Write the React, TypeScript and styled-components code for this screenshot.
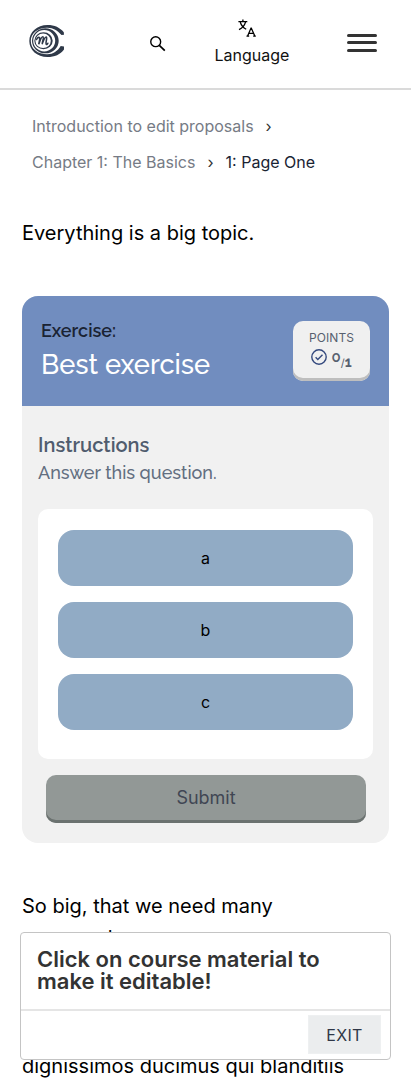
import React from "react";
import styled, { createGlobalStyle } from "styled-components";

const GlobalStyle = createGlobalStyle`
  *, *::before, *::after { box-sizing: border-box; }
  html, body { margin: 0; height: 100%; overflow: hidden; background: #fff; }
  body { font-family: Inter, "Liberation Sans", sans-serif; color: #000; }
  button { font-family: inherit; cursor: pointer; }
  h1, h2, h3, p, ol { margin: 0; padding: 0; }
`;

const Page = styled.div`
  height: 1080px;
  overflow: hidden;
`;

const Header = styled.header`
  display: flex;
  align-items: center;
  height: 90px;
  padding: 0 34px 0 29px;
  border-bottom: 2px solid #dadada;
`;

const Logo = styled.svg`
  width: 37px;
  height: 34px;
  margin-bottom: 6px;
`;

const IconButton = styled.button`
  display: flex;
  padding: 0;
  border: 0;
  background: none;
`;

const SearchButton = styled(IconButton)`
  margin-left: 83px;
  margin-bottom: 1px;
`;

const LanguageButton = styled(IconButton)`
  flex-direction: column;
  align-items: center;
  gap: 8px;
  width: 76px;
  margin-left: 48px;
  margin-bottom: 4px;
  font-size: 16px;
  line-height: 20px;
  color: #111;
`;

const LanguageIcon = styled.svg`
  width: 18px;
  height: 18px;
  margin-right: 10px;
`;

const MenuButton = styled(IconButton)`
  flex-direction: column;
  justify-content: space-between;
  height: 18px;
  margin-left: auto;
  margin-bottom: 2px;
`;

const MenuBar = styled.span`
  width: 30px;
  height: 3px;
  border-radius: 2px;
  background: #333;

  &:nth-child(2) {
    margin-bottom: 1px;
  }
`;

const Breadcrumbs = styled.ol`
  display: flex;
  flex-wrap: wrap;
  margin: 18px 32px 0;
  list-style: none;
  font-size: 16px;
  line-height: 36px;
`;

const Crumb = styled.li<{ $current?: boolean }>`
  color: ${(p) => (p.$current ? "#1a2333" : "#767b85")};
`;

const Separator = styled.span`
  margin: 0 12px;
  color: #333;
`;

const Content = styled.main`
  padding: 37px 22px 0;
`;

const Paragraph = styled.p<{ $gap?: number }>`
  margin-bottom: ${(p) => p.$gap ?? 32}px;
  font-size: 20px;
  line-height: 32px;
`;

const Exercise = styled.section`
  margin: 47px 0;
  overflow: hidden;
  border-radius: 16px;
  background: #f1f1f1;
`;

const ExerciseHeader = styled.div`
  display: flex;
  justify-content: space-between;
  align-items: flex-start;
  height: 110px;
  padding: 25px 19px 0;
  background: #718dbf;
  font-family: Raleway, Lato, sans-serif;
`;

const ExerciseLabel = styled.div`
  font-size: 18px;
  font-weight: 600;
  line-height: 20px;
  color: #1a2333;
`;

const ExerciseTitle = styled.h2`
  margin-top: 6px;
  font-size: 27.2px;
  font-weight: 500;
  line-height: 34px;
  color: #fff;
`;

const Points = styled.div`
  display: flex;
  flex-direction: column;
  align-items: center;
  width: 77px;
  height: 60px;
  padding-top: 9px;
  border-radius: 10px;
  background: #f0f0f0;
  box-shadow: inset 0 -3px 0 #bebebe;
  color: #57606f;
  font-family: Inter, sans-serif;
  font-size: 12px;
  line-height: 16px;
  letter-spacing: 0.1px;
`;

const Score = styled.div`
  display: flex;
  align-items: center;
  height: 21px;
  font-family: Raleway, Lato, sans-serif;
  font-size: 15px;
  font-weight: 600;
  letter-spacing: 0;
`;

const ScoreIcon = styled.svg`
  width: 16px;
  height: 16px;
  margin-right: 4px;
`;

const MaxScore = styled.span`
  padding-top: 12px;
  font-size: 14px;
  font-weight: 700;
`;

const Slash = styled.span`
  font-family: Inter, sans-serif;
  font-size: 11px;
  font-weight: 400;
`;

const ExerciseBody = styled.div`
  padding: 27px 16px 20px;
`;

const InstructionsTitle = styled.h3`
  font-family: Raleway, Lato, sans-serif;
  font-size: 20px;
  font-weight: 600;
  line-height: 24px;
  color: #505c6e;
`;

const InstructionsText = styled.p`
  margin-top: 3px;
  font-family: Raleway, Lato, sans-serif;
  font-size: 18px;
  font-weight: 500;
  line-height: 26px;
  color: #626e80;
`;

const Options = styled.div`
  display: flex;
  flex-direction: column;
  gap: 16px;
  height: 250px;
  margin-top: 23px;
  padding: 21px 20px 0;
  border-radius: 10px;
  background: #fff;
`;

const Option = styled.button`
  height: 56px;
  border: 0;
  border-radius: 16px;
  background: #91abc5;
  font-size: 16px;
  color: #000;
`;

const Submit = styled.button`
  display: block;
  width: calc(100% - 15px);
  height: 48px;
  margin: 16px 7px 0 8px;
  padding: 0 0 3px;
  border: 0;
  border-radius: 10px;
  background: #929896;
  box-shadow: inset 0 -3px 0 #6b7270;
  font-size: 18px;
  color: #404653;
`;

const Dialog = styled.aside`
  position: fixed;
  left: 20px;
  top: 932px;
  width: 371px;
  height: 128px;
  border: 1px solid #c4c4c4;
  border-radius: 4px;
  background: #fff;
`;

const DialogTitle = styled.h2`
  height: 78px;
  padding: 15px 16px 0;
  border-bottom: 2px solid #e5e5e5;
  font-size: 22px;
  font-weight: 600;
  line-height: 22px;
  color: #333;
`;

const DialogActions = styled.div`
  display: flex;
  justify-content: flex-end;
  padding: 4px 9px 0 0;
`;

const ExitButton = styled.button`
  width: 73px;
  height: 39px;
  padding: 0;
  border: 1px solid #eef0f1;
  background: #ebedee;
  font-size: 16px;
  letter-spacing: 0.3px;
  color: #2f3747;
`;

export default function App() {
  return (
    <Page>
      <GlobalStyle />
      <Header>
        <Logo viewBox="0 0 37 34" fill="#2f3949" fillRule="evenodd" aria-label="Home">
          <path d="M34.800 8.300C31 3.500 25.500 1 18.500 1 8 1 .3 8 .3 17s7.700 16 18.200 16c7 0 13-2.500 16.500-7.500V22.600l-3.300-.6c-3 5-7.700 8.200-13.200 8.300C9 30.500 1.800 25 1.800 17S9 3.500 18.500 3.700c6 .2 10 2.800 14 7.400l2.500-.4Z" />
          <path d="M3 16.800a13.350 12.500 0 1 0 26.700 0a13.350 12.500 0 1 0-26.700 0ZM4.200 16.800a11 10.700 0 1 1 22 0a11 10.700 0 1 1-22 0Z" />
          <path d="M5.300 16.800a9.200 8.500 0 1 0 18.400 0a9.200 8.500 0 1 0-18.400 0ZM6.400 16.800a7.700 7.300 0 1 1 15.400 0a7.700 7.300 0 1 1-15.400 0Z" />
          <path d="M7.500 15.500c1.200-3 3.700-2.800 3.200.1l-1 4.700c1.400-3.800 2.600-8 4.200-7.600 1.200.3-.3 4.700-.8 7.400 1.400-3.600 2.600-7.400 4.200-7.100 1.400.3-1.100 5.900-.1 7.300.5.600 1.100-.2 1.600-1" fill="none" stroke="#2f3949" strokeWidth="1.600" strokeLinecap="round" />
        </Logo>
        <SearchButton aria-label="Search">
          <svg width="17" height="17" viewBox="0 0 17 17" fill="none" stroke="#000">
            <circle cx="6.700" cy="6.700" r="4.950" strokeWidth="1.400" />
            <path d="M10.300 10.300 15.800 15.700" strokeWidth="1.700" />
          </svg>
        </SearchButton>
        <LanguageButton>
          <LanguageIcon viewBox="0 0 18 18" fill="none" stroke="#000" strokeWidth="1.300">
            <path d="M.4 2.600H9.300M4.900.4V2.600M2.300 3.200C3.300 6.500 5.500 8.800 8.200 10.300M7.500 3.200C6.600 6.600 4.300 9.200 1 10.700" />
            <path d="M9.500 17.200 13 9.100h.3l3.600 8.100M10.900 14.400h4.700M8.500 17.200h2.700M15.200 17.200h2.600" />
          </LanguageIcon>
          Language
        </LanguageButton>
        <MenuButton aria-label="Menu">
          <MenuBar />
          <MenuBar />
          <MenuBar />
        </MenuButton>
      </Header>

      <Breadcrumbs>
        <Crumb>Introduction to edit proposals<Separator>›</Separator></Crumb>
        <Crumb>Chapter 1: The Basics<Separator>›</Separator></Crumb>
        <Crumb $current>1: Page One</Crumb>
      </Breadcrumbs>

      <Content>
        <Paragraph>Everything is a big topic.</Paragraph>
        <Exercise>
          <ExerciseHeader>
            <div>
              <ExerciseLabel>Exercise:</ExerciseLabel>
              <ExerciseTitle>Best exercise</ExerciseTitle>
            </div>
            <Points>
              POINTS
              <Score>
                <ScoreIcon viewBox="0 0 16 16" fill="none" stroke="#34497e">
                  <circle cx="8" cy="8" r="7.200" strokeWidth="1.400" />
                  <path d="m4.600 8.300 2.200 2.200 4.700-4.800" strokeWidth="1.400" />
                </ScoreIcon>
                0<MaxScore><Slash>/</Slash>1</MaxScore>
              </Score>
            </Points>
          </ExerciseHeader>
          <ExerciseBody>
            <InstructionsTitle>Instructions</InstructionsTitle>
            <InstructionsText>Answer this question.</InstructionsText>
            <Options>
              <Option>a</Option>
              <Option>b</Option>
              <Option>c</Option>
            </Options>
            <Submit>Submit</Submit>
          </ExerciseBody>
        </Exercise>
        <Paragraph $gap={64}>So big, that we need many paragraphs.</Paragraph>
        <Paragraph>
          At vero eos et accusamus et iusto odio dignissimos ducimus qui blanditiis
        </Paragraph>
      </Content>

      <Dialog>
        <DialogTitle>Click on course material to make it editable!</DialogTitle>
        <DialogActions>
          <ExitButton>EXIT</ExitButton>
        </DialogActions>
      </Dialog>
    </Page>
  );
}
